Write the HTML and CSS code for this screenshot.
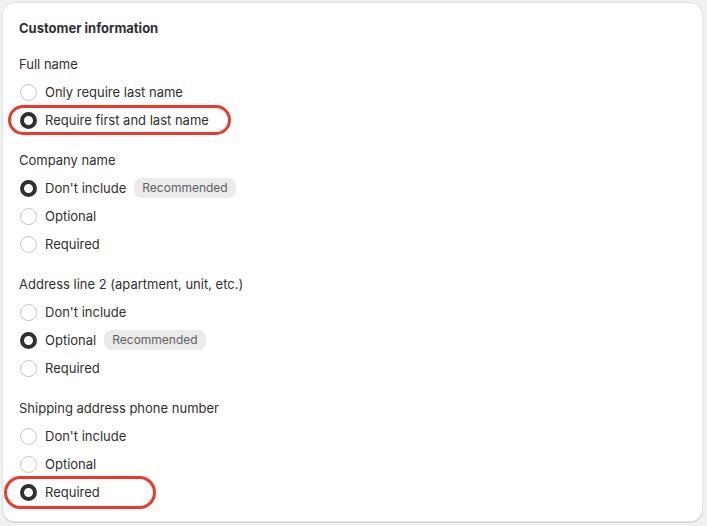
FILE: index.html
```html
<!DOCTYPE html>
<html lang="en">
<head>
<meta charset="utf-8">
<title>Customer information</title>
<link rel="stylesheet" href="styles.css">
</head>
<body>
<div class="card">
  <h2 class="title">Customer information</h2>

  <div class="section">
    <div class="label">Full name</div>
    <div class="options">
      <div class="option"><span class="radio"></span><span>Only require last name</span></div>
      <div class="option marked ring-a"><span class="radio on"></span><span>Require first and last name</span></div>
    </div>
  </div>

  <div class="section">
    <div class="label">Company name</div>
    <div class="options">
      <div class="option"><span class="radio on"></span><span>Don't include</span><span class="badge">Recommended</span></div>
      <div class="option"><span class="radio"></span><span>Optional</span></div>
      <div class="option"><span class="radio"></span><span>Required</span></div>
    </div>
  </div>

  <div class="section">
    <div class="label">Address line 2 (apartment, unit, etc.)</div>
    <div class="options">
      <div class="option"><span class="radio"></span><span>Don't include</span></div>
      <div class="option"><span class="radio on"></span><span>Optional</span><span class="badge">Recommended</span></div>
      <div class="option"><span class="radio"></span><span>Required</span></div>
    </div>
  </div>

  <div class="section">
    <div class="label">Shipping address phone number</div>
    <div class="options">
      <div class="option"><span class="radio"></span><span>Don't include</span></div>
      <div class="option"><span class="radio"></span><span>Optional</span></div>
      <div class="option marked ring-b"><span class="radio on"></span><span>Required</span></div>
    </div>
  </div>
</div>
</body>
</html>
```
FILE: styles.css
```css
html, body {
  margin: 0;
  padding: 0;
}
body {
  background: #f1f1f1;
  font-family: Inter, "Noto Sans", "Liberation Sans", sans-serif;
  font-size: 13px;
  line-height: 20px;
  color: #303030;
  height: 526px;
  overflow: hidden;
}
.card {
  margin: 3px 5px 0 3px;
  height: 518px;
  box-sizing: border-box;
  background: #fff;
  border-radius: 12px;
  box-shadow: 0 0 0 1px #e3e3e3, 0 1px 0 1px #d4d4d4;
  padding: 15px 16px;
  display: flex;
  flex-direction: column;
  gap: 16px;
}
.title {
  margin: 0;
  font-size: 13px;
  line-height: 20px;
  font-weight: 650;
}
.section {
  display: flex;
  flex-direction: column;
  gap: 4px;
}
.options {
  display: flex;
  flex-direction: column;
  align-items: flex-start;
}
.option {
  display: inline-flex;
  align-items: center;
  height: 28px;
  gap: 8px;
}
.radio {
  width: 15px;
  height: 15px;
  margin-left: 1px;
  border: 1px solid #c4c4c4;
  border-radius: 50%;
  box-sizing: content-box;
  flex: none;
}
.radio.on {
  width: 9px;
  height: 9px;
  border: 4px solid #303030;
  background: #fff;
}
.badge {
  background: #ebebeb;
  color: #616161;
  font-size: 12px;
  line-height: 20px;
  padding: 0 8px;
  border-radius: 8px;
}
.marked {
  position: relative;
}
.marked::after {
  content: "";
  position: absolute;
  border: 3px solid #eb3a2b;
  border-radius: 18px;
  pointer-events: none;
}
.ring-a::after {
  left: -11px;
  right: -22px;
  top: -1px;
  bottom: -1px;
}
.ring-b::after {
  left: -15px;
  right: -56px;
  top: -2px;
  bottom: -3px;
}
```
